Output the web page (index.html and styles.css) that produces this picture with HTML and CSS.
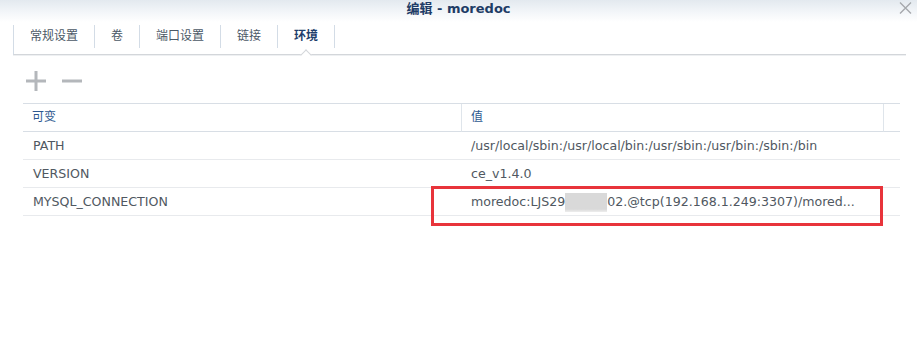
FILE: index.html
```html
<!DOCTYPE html>
<html lang="zh">
<head>
<meta charset="utf-8">
<title>编辑 - moredoc</title>
<link rel="stylesheet" href="styles.css">
</head>
<body>
<div class="window">
  <div class="titlebar">
    <span class="title">编辑 - moredoc</span>
    <span class="close">
      <svg width="13" height="12" viewBox="0 0 13 12"><path d="M1 0.5 L12 11.5 M12 0.5 L1 11.5" stroke="#a5a8ac" stroke-width="1.4" fill="none"/></svg>
    </span>
  </div>
  <div class="tabs">
    <div class="tab">常规设置</div>
    <div class="tab">卷</div>
    <div class="tab">端口设置</div>
    <div class="tab">链接</div>
    <div class="tab active">环境</div>
  </div>
  <div class="toolbar">
    <svg class="tool" width="20" height="20" viewBox="0 0 20 20"><rect x="0" y="8.5" width="20" height="3" fill="#b4b7bb"/><rect x="8.5" y="0" width="3" height="20" fill="#b4b7bb"/></svg>
    <svg class="tool" width="20" height="20" viewBox="0 0 20 20"><rect x="0" y="8.5" width="20" height="3" fill="#b4b7bb"/></svg>
  </div>
  <div class="grid-wrap">
    <div class="grid">
      <div class="hcell">可变</div>
      <div class="hcell sep">值</div>
      <div class="hcell sep"></div>

      <div class="cell">PATH</div>
      <div class="cell">/usr/local/sbin:/usr/local/bin:/usr/sbin:/usr/bin:/sbin:/bin</div>
      <div class="cell"></div>

      <div class="cell">VERSION</div>
      <div class="cell">ce_v1.4.0</div>
      <div class="cell"></div>

      <div class="cell">MYSQL_CONNECTION</div>
      <div class="cell clip">moredoc:LJS29<span class="masked"></span>02.@tcp(192.168.1.249:3307)/mored...</div>
      <div class="cell"></div>
    </div>
    <div class="highlight"></div>
  </div>
</div>
</body>
</html>
```

FILE: styles.css
```css
html, body {
  margin: 0;
  padding: 0;
  background: #ffffff;
}

body {
  font-family: "DejaVu Sans", "Noto Sans CJK SC", sans-serif;
  color: #505860;
}

.window {
  width: 917px;
  height: 364px;
  background: #ffffff;
}

.titlebar {
  height: 22px;
  position: relative;
  display: flex;
  justify-content: center;
  background: linear-gradient(to bottom, #e3e9ef 0%, #f3f6f9 55%, #ffffff 100%);
}

.title {
  font-size: 13px;
  font-weight: bold;
  line-height: 18px;
  color: #1e3c66;
}

.close {
  position: absolute;
  right: 5px;
  top: 2px;
  width: 13px;
  height: 12px;
  display: flex;
}

.tabs {
  display: flex;
  margin: 3px 11px 0 13px;
  padding-bottom: 6px;
  border-left: 1px solid #d3dce6;
  border-bottom: 1px solid #d3d6da;
  box-shadow: 0 1px 0 #eef0f2;
}

.tab {
  position: relative;
  padding: 0 16px;
  font-size: 12px;
  line-height: 23px;
  color: #4b5866;
  border-right: 1px solid #d3dce6;
}

.tab.active {
  font-weight: bold;
  color: #1f3f6c;
}

.tab.active::after {
  content: "";
  position: absolute;
  left: calc(50% - 4px);
  top: 25.5px;
  width: 8px;
  height: 8px;
  box-sizing: border-box;
  background: #ffffff;
  border-top: 1px solid #d3d6da;
  border-left: 1px solid #d3d6da;
  transform: rotate(45deg);
}

.toolbar {
  display: flex;
  gap: 16px;
  margin: 16px 0 0 26px;
  height: 20px;
}

.tool {
  display: block;
}

.grid-wrap {
  position: relative;
  margin: 12px 0 0 23px;
  width: 877px;
}

.grid {
  display: grid;
  grid-template-columns: 438px 422px 17px;
  border-top: 1px solid #d8dee5;
  font-size: 12.6px;
}

.hcell {
  height: 27px;
  line-height: 27px;
  padding-left: 9px;
  color: #2d5890;
  font-size: 12px;
  border-bottom: 1px solid #d8dee5;
}

.hcell.sep {
  border-left: 1px solid #dfe5eb;
}

.cell {
  height: 27px;
  line-height: 27px;
  padding-left: 10px;
  border-bottom: 1px solid #e8eaed;
  white-space: nowrap;
  overflow: hidden;
  color: #505861;
}

.clip {
  text-overflow: ellipsis;
  display: flex;
  align-items: center;
}

.masked {
  display: inline-block;
  width: 42px;
  height: 19px;
  margin-top: 1px;
  background: linear-gradient(to bottom, #d9d9d9 0%, #d9d9d9 85%, #eeeeee 100%);
}

.highlight {
  position: absolute;
  left: 408px;
  top: 83px;
  width: 452px;
  height: 40px;
  box-sizing: border-box;
  border: 3px solid #e8343b;
}
```
